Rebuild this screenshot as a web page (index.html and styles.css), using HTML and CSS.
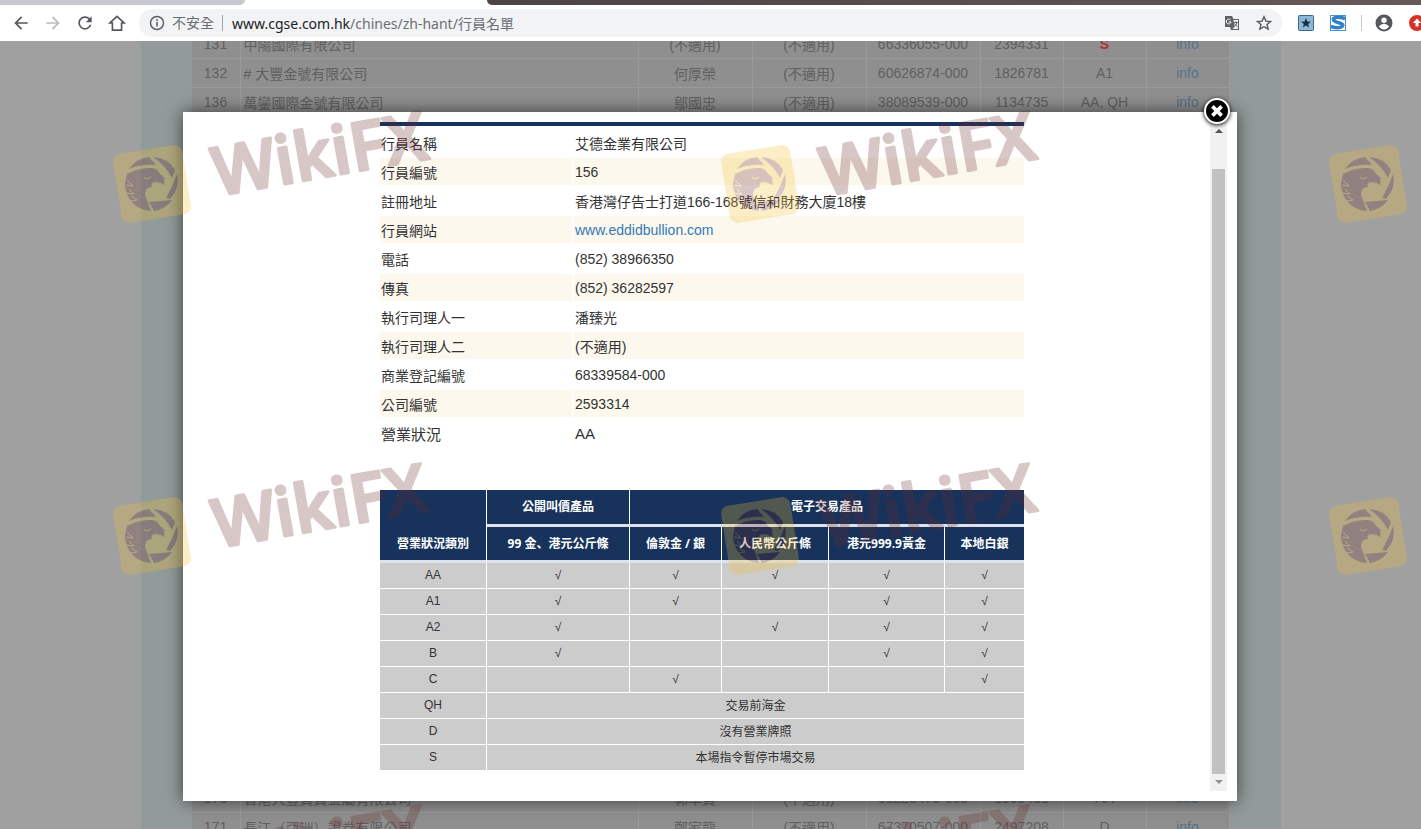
FILE: index.html
```
<!DOCTYPE html>
<html lang="zh-Hant">
<head>
	<meta charset="utf-8">
	<title>行員名單</title>
	<link rel="stylesheet" href="styles.css">
</head>

<body>

<div class="tabstrip">
	<div class="tab-idle"></div>
	<div class="tab-active"></div>
	<div class="tab-rest"></div>
</div>

<div class="toolbar">
	<button class="tool" aria-label="返回"><svg viewBox="0 0 24 24"><path d="M20 11H7.800l5.600-5.600L12 4l-8 8 8 8 1.400-1.400L7.800 13H20z"/></svg></button>
	<button class="tool off" aria-label="前進"><svg viewBox="0 0 24 24"><path d="M12 4l-1.400 1.400L16.200 11H4v2h12.200l-5.600 5.600L12 20l8-8z"/></svg></button>
	<button class="tool" aria-label="重新整理"><svg viewBox="0 0 24 24"><path d="M17.700 6.300A8 8 0 1 0 19.700 14h-2.100a6 6 0 1 1-1.400-6.200L13 11h7V4z"/></svg></button>
	<button class="tool" aria-label="首頁"><svg viewBox="0 0 24 24"><path d="M12 4L3.500 12H6.500v8.500h11V12h3z" fill="none" stroke="#54585c" stroke-width="2"/></svg></button>
	<div class="omnibox">
		<svg class="info-icon" viewBox="0 0 16 16"><circle cx="8" cy="8" r="6.500" fill="none" stroke="#5f6368" stroke-width="1.500"/><path d="M7.200 7h1.600v4.500H7.200zM7.200 4.300h1.600v1.600H7.200z"/></svg>
		<span class="insecure">不安全</span>
		<span class="url"><b>www.cgse.com.hk</b>/chines/zh-hant/行員名單</span>
		<button class="small" aria-label="翻譯"><svg viewBox="0 0 16 16"><path d="M1 1h7l1.500 3H15v11H7l-1-3H1z"/><path d="M9.500 5H14v9H8.500l2-2z" fill="#f1f3f4"/><path d="M9.800 7.500h4M11.800 6.500v1M13 7.500q-.8 3-3 4M10.500 8.500q1 2 3 3" fill="none" stroke="#5f6368"/><path d="M6.500 5A2.400 2.400 0 1 0 7 7H4.800" fill="none" stroke="#fff"/></svg></button>
		<button class="small" aria-label="加入書籤"><svg viewBox="0 0 16 16"><path d="M8 1.800l1.900 4.300 4.600.4-3.500 3 1.100 4.600L8 11.700l-4.100 2.400L5 9.500 1.500 6.500l4.600-.4z" fill="none" stroke="#54585c" stroke-width="1.400"/></svg></button>
	</div>
	<button class="ext" aria-label="書籤"><svg viewBox="0 0 16 16"><rect x=".5" y=".5" width="15" height="15" rx="1" fill="#8bb8d8" stroke="#41647f"/><path d="M8 3l1.400 3.500 3.600.2-2.800 2.300.9 3.600L8 10.600l-3.100 2 .9-3.600L3 6.700l3.600-.2z" fill="#1d3143"/></svg></button>
	<button class="ext" aria-label="搜尋"><svg viewBox="0 0 16 16"><rect x=".5" y=".5" width="15" height="15" fill="#fff" stroke="#4a90cf"/><path d="M15 3.500Q6 1 3.500 3.500 2.500 6 8 7.500q6.500 1.500 4 4Q9 14 1 11.500" fill="none" stroke="#3181c8" stroke-width="3.500"/></svg></button>
	<span class="divider"></span>
	<button class="ext profile" aria-label="使用者"><svg viewBox="0 0 18 18"><circle cx="9" cy="9" r="8.500" fill="#54585c"/><circle cx="9" cy="6.300" r="2.700" fill="#fff"/><path d="M3.800 12.500Q6 9.800 9 9.800t5.200 2.700Q12 15.500 9 15.500t-5.200-3z" fill="#fff"/></svg></button>
	<button class="ext update" aria-label="更新"><svg viewBox="0 0 16 16"><circle cx="8" cy="8" r="8" fill="#d93025"/><path d="M8 3.500l4 4.500H9.500v3.500h-3V8H4z" fill="#fff"/></svg></button>
</div>

<div class="page">

	<div class="container">
		<table class="members">
			<colgroup><col class="no"><col><col class="w114"><col class="w114"><col class="w114"><col class="w83"><col class="w83"><col class="w83"></colgroup>
			<tr><td>131<td class="name">中陽國際有限公司<td>(不適用)<td>(不適用)<td>66336055-000<td>2394331<td class="stop">S<td><a href="#">info</a></tr>
			<tr><td>132<td class="name"># 大豐金號有限公司<td>何厚榮<td>(不適用)<td>60626874-000<td>1826781<td>A1<td><a href="#">info</a></tr>
			<tr><td>136<td class="name">萬鑾國際金號有限公司<td>鄔國忠<td>(不適用)<td>38089539-000<td>1134735<td>AA, QH<td><a href="#">info</a></tr>
			<tr class="covered"><td><td><td><td><td><td><td><td></tr>
			<tr><td>170<td class="name">香港大豐貴貴金屬有限公司<td>郭卓賢<td>(不適用)<td>61220470-000<td>1099431<td>AA<td><a href="#">info</a></tr>
			<tr><td>171<td class="name">長江（亞洲）證券有限公司<td>鄭家龍<td>(不適用)<td>67370507-000<td>2497208<td>D<td><a href="#">info</a></tr>
		</table>
	</div>

	<div class="overlay">
		<div class="popup">
			<button class="close" aria-label="關閉"><svg viewBox="0 0 24 24"><path d="M7 7l10 10M17 7L7 17" stroke="#fff" stroke-width="4"/></svg></button>
			<div class="content">
				<table class="detail">
					<tr><th>行員名稱</th><td>艾德金業有限公司</td></tr>
					<tr><th>行員編號</th><td>156</td></tr>
					<tr><th>註冊地址</th><td>香港灣仔告士打道166-168號信和財務大廈18樓</td></tr>
					<tr><th>行員網站</th><td><a href="#">www.eddidbullion.com</a></td></tr>
					<tr><th>電話</th><td>(852) 38966350</td></tr>
					<tr><th>傳真</th><td>(852) 36282597</td></tr>
					<tr><th>執行司理人一</th><td>潘臻光</td></tr>
					<tr><th>執行司理人二</th><td>(不適用)</td></tr>
					<tr><th>商業登記編號</th><td>68339584-000</td></tr>
					<tr><th>公司編號</th><td>2593314</td></tr>
					<tr class="status"><th>營業狀況</th><td>AA</td></tr>
				</table>

				<table class="types">
					<colgroup><col class="c1"><col class="c2"><col class="c3"><col class="c4"><col class="c5"><col class="c6"></colgroup>
					<thead>
						<tr class="group"><th rowspan="2" class="kind">營業狀況類別</th><th>公開叫價產品</th><th colspan="4">電子交易產品</th></tr>
						<tr><th lang="ja">99 金、港元公斤條</th><th>倫敦金 / 銀</th><th>人民幣公斤條</th><th>港元999.9黃金</th><th>本地白銀</th></tr>
					</thead>
					<tbody>
						<tr><td>AA</td><td>√</td><td>√</td><td>√</td><td>√</td><td>√</td></tr>
						<tr><td>A1</td><td>√</td><td>√</td><td></td><td>√</td><td>√</td></tr>
						<tr><td>A2</td><td>√</td><td></td><td>√</td><td>√</td><td>√</td></tr>
						<tr><td>B</td><td>√</td><td></td><td></td><td>√</td><td>√</td></tr>
						<tr><td>C</td><td></td><td>√</td><td></td><td></td><td>√</td></tr>
						<tr><td>QH</td><td colspan="5">交易前海金</td></tr>
						<tr><td>D</td><td colspan="5">沒有營業牌照</td></tr>
						<tr><td>S</td><td colspan="5">本場指令暫停市場交易</td></tr>
					</tbody>
				</table>
			</div>
			<div class="scrollbar"><i class="up"></i><i class="thumb"></i><i class="down"></i></div>
		</div>
	</div>

</div>

<svg width="0" height="0" class="defs">
	<symbol id="mark" viewBox="0 0 340 130">
		<rect x="7" y="49" width="70" height="70" rx="8" transform="rotate(-9 42 84)" fill="#f5c22e"/>
		<!-- shutter blades, then the eagle -->
		<g transform="translate(42 84)" fill="#6a2a2a">
			<path d="M-23-15A27 27 0 0 1-3-27L4-19Q-10-20-23-15z"/>
			<path d="M1-27A27 27 0 0 1 23-14L20-6Q14-18 1-27z"/>
			<path d="M25-10A27 27 0 0 1 18 15L14 14Q21 2 25-10z"/>
			<path d="M20 16A27 27 0 0 1 2 27L-3 18z"/>
			<path d="M-25-10Q-12-17 0-16 6-15 8-10 14-8 12 1 8-2 3-2-2-1 0 3-6 3-7 9-7 14-4 18-3 23-1 27A27 27 0 0 1-27-1z"/>
			<path d="M-26 1l7 1-6-6M-26 9l8 1-5-5M-22 17l7-1-6-4M-8-6q4 2 7-1" fill="none" stroke="#f5c22e"/>
		</g>
		<text x="107" y="96" transform="rotate(-10 107 96)">WikiFX</text>
	</symbol>
</svg>
<div class="watermarks">
	<svg><use href="#mark"/></svg><svg><use href="#mark"/></svg><svg><use href="#mark"/></svg>
	<svg><use href="#mark"/></svg><svg><use href="#mark"/></svg><svg><use href="#mark"/></svg>
	<svg><use href="#mark"/></svg><svg><use href="#mark"/></svg><svg><use href="#mark"/></svg>
</div>

</body>
</html>
```
FILE: styles.css
```
* {
    box-sizing: border-box;
}
body {
    margin: 0;
    height: 100vh;
    display: flex;
    flex-direction: column;
    overflow: hidden;
    position: relative;
    font-family: "Liberation Sans", "Noto Sans CJK TC", sans-serif;
    font-size: 14px;
    color: #333;
}
table {
    border-collapse: separate;
    border-spacing: 0;
    table-layout: fixed;
}
td, th {
    padding: 0;
}
a {
    color: #337ab7;
    text-decoration: none;
}
button {
    border: 0;
    padding: 0;
    background: none;
    display: block;
}
button svg {
    display: block;
    width: 100%;
    height: 100%;
}

/* browser window */
.tabstrip {
    display: flex;
    height: 5px;
    flex: none;
    background: #fff;
}
.tab-idle {
    width: 245px;
    background: #c9c6d0;
    border-bottom-right-radius: 5px;
}
.tab-active {
    width: 242px;
}
.tab-rest {
    flex: 1;
    background: linear-gradient(90deg, #4b4444, #66595a);
    border-bottom-left-radius: 5px;
}
.toolbar {
    display: flex;
    align-items: center;
    height: 36px;
    flex: none;
    padding-left: 11px;
    background: #fff;
    overflow: hidden;
}
.tool {
    width: 20px;
    height: 20px;
    margin-right: 12px;
    flex: none;
    fill: #54585c;
}
.tool.off {
    fill: #b9bbbd;
}
.omnibox {
    display: flex;
    align-items: center;
    flex: 1;
    height: 28px;
    padding: 0 10px;
    border-radius: 14px;
    background: #f1f3f4;
    color: #6b6f73;
    font-family: "Noto Sans", "Noto Sans CJK TC", sans-serif;
    white-space: nowrap;
}
.info-icon {
    width: 16px;
    height: 16px;
    margin-right: 7px;
    fill: #5f6368;
}
.insecure {
    padding-right: 8px;
    margin-right: 9px;
    border-right: 1px solid #a4a7aa;
    line-height: 16px;
}
.url {
    flex: 1;
}
.url b {
    font-weight: normal;
    color: #202124;
}
.small {
    width: 16px;
    height: 16px;
    margin-left: 16px;
    fill: #5f6368;
}
.ext {
    width: 16px;
    height: 16px;
    margin-left: 16px;
    flex: none;
}
.divider {
    width: 1px;
    height: 16px;
    margin-left: 15px;
    background: #c8c8c8;
}
.profile {
    width: 18px;
    height: 18px;
    margin-left: 13px;
}
.update {
    margin-right: -4px;
}

/* dimmed page */
.page {
    flex: 1;
    position: relative;
    overflow: hidden;
    background: #a0a0a0;
}
.container {
    max-width: 1140px;
    margin: 0 auto;
    padding: 0 51px;
    height: 100%;
    overflow: hidden;
    background: #929b9a;
}
.members {
    width: 100%;
    margin-top: -11px;
    background: #8f8f8f;
    color: #606060;
    text-align: center;
}
.members td {
    height: 29px;
    border-right: 1px solid #9a9a9a;
    border-bottom: 1px solid #9a9a9a;
}
.members .name {
    padding-left: 3px;
    text-align: left;
}
.members .covered td {
    height: 667px;
}
.members .stop {
    color: #a33;
    font-weight: bold;
}
.members a {
    color: #56718a;
}
.no {
    width: 49px;
}
.w114 {
    width: 114px;
}
.w83 {
    width: 83px;
}

/* member popup */
.overlay {
    position: absolute;
    inset: 0;
    display: flex;
    justify-content: center;
    padding: 71px 21px 28px 20px;
}
.popup {
    position: relative;
    display: flex;
    flex: 0 1 1054px;
    padding: 10px;
    background: #fff;
    box-shadow: 0 0 16px rgba(0, 0, 0, .6);
}
.close {
    position: absolute;
    top: -14px;
    right: 7px;
    width: 26px;
    height: 26px;
    border: 2px solid #fff;
    border-radius: 50%;
    background: #000;
    box-shadow: 0 1px 4px #000;
}
.content {
    flex: 1;
    padding-left: 1px;
    overflow: hidden;
}
.detail, .types {
    width: 644px;
    margin: 0 auto;
}
.detail {
    border-top: 4px solid #17335c;
    padding-top: 3px;
}
.detail th, .detail td {
    height: 29px;
    padding-left: 1px;
    border-bottom: 2px solid #fff;
    text-align: left;
    font-weight: normal;
}
.detail th {
    width: 194px;
    border-right: 2px solid #fff;
}
.detail tr:nth-child(even) {
    background: #fcf8ee;
}
.detail .status {
    font-size: 15px;
}
.detail .status th, .detail .status td {
    height: 31px;
}
.types {
    margin-top: 40px;
    font-size: 12px;
    text-align: center;
}
.types th {
    height: 36px;
    padding-bottom: 2px;
    background: #17335c;
    border-bottom: 3px solid #dfe2ea;
    border-right: 1px solid #fff;
    color: #fff;
    font-family: "Open Sans", "Noto Sans CJK JP", sans-serif;
}
.types .group th {
    height: 37px;
}
.types .group .kind {
    vertical-align: bottom;
    padding-bottom: 8px;
}
.types td {
    height: 26px;
    padding-bottom: 2px;
    background: #ccc;
    border-bottom: 1px solid #fff;
    border-right: 1px solid #fff;
}
.types tr > :last-child {
    border-right: 0;
}
.c1 { width: 107px; }
.c2 { width: 143px; }
.c3 { width: 92px; }
.c4 { width: 107px; }
.c5 { width: 116px; }
.c6 { width: 79px; }

.scrollbar {
    display: flex;
    flex-direction: column;
    align-items: center;
    width: 17px;
    padding: 7px 0;
    background: #f1f1f1;
}
.up, .down {
    border: 4px solid transparent;
}
.up {
    border-top: 0;
    border-bottom-color: #505050;
}
.down {
    border-bottom: 0;
    border-top-color: #909090;
}
.thumb {
    flex: 1;
    width: 13px;
    margin: 36px 0 6px;
    background: #c1c1c1;
}

/* watermark */
.defs {
    position: absolute;
}
.watermarks {
    position: absolute;
    inset: 100px 0 0 110px;
    display: grid;
    grid-template-columns: repeat(3, 608px);
    grid-template-rows: 352px 342px 130px;
    overflow: hidden;
    pointer-events: none;
}
.watermarks svg {
    width: 340px;
    height: 130px;
    opacity: .26;
    font-family: "Open Sans", sans-serif;
    font-size: 67px;
    font-weight: 600;
    fill: #6a2a2a;
}
#mark text {
    stroke: #6a2a2a;
    stroke-width: 3px;
    stroke-linejoin: round;
}
```
